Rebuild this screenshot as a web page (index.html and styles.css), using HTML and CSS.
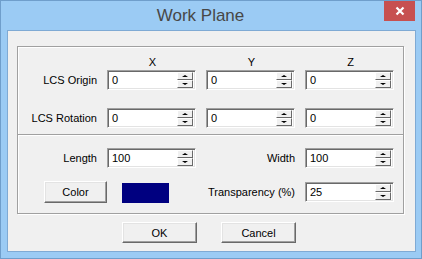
FILE: index.html
```html
<!DOCTYPE html>
<html lang="en">
  <head>
    <meta charset="UTF-8" />
    <title>Work Plane</title>
    <link rel="stylesheet" href="styles.css">
  </head>
  <body>
    <div class="window">
      <div class="titlebar">
        <div class="title">Work Plane</div>
        <div class="close_button">
          <svg width="10" height="10" viewBox="0 0 10 10">
            <path d="M1.5 1.5 L8.5 8.5 M8.5 1.5 L1.5 8.5" stroke="#fff" stroke-width="2.2" />
          </svg>
        </div>
      </div>
      <div class="client">
        <div class="group">
          <div class="section coords">
            <div class="row head">
              <span></span>
              <span class="axis">X</span>
              <span class="axis">Y</span>
              <span class="axis">Z</span>
            </div>
            <div class="row">
              <label>LCS Origin</label>
              <div class="spin"><span class="val">0</span><span class="arrows"><i class="up"></i><i class="down"></i></span></div>
              <div class="spin"><span class="val">0</span><span class="arrows"><i class="up"></i><i class="down"></i></span></div>
              <div class="spin"><span class="val">0</span><span class="arrows"><i class="up"></i><i class="down"></i></span></div>
            </div>
            <div class="row second">
              <label>LCS Rotation</label>
              <div class="spin"><span class="val">0</span><span class="arrows"><i class="up"></i><i class="down"></i></span></div>
              <div class="spin"><span class="val">0</span><span class="arrows"><i class="up"></i><i class="down"></i></span></div>
              <div class="spin"><span class="val">0</span><span class="arrows"><i class="up"></i><i class="down"></i></span></div>
            </div>
          </div>
          <div class="section plane">
            <div class="row">
              <label>Length</label>
              <div class="spin"><span class="val">100</span><span class="arrows"><i class="up"></i><i class="down"></i></span></div>
              <label>Width</label>
              <div class="spin"><span class="val">100</span><span class="arrows"><i class="up"></i><i class="down"></i></span></div>
            </div>
            <div class="row color_row">
              <div class="color_pick">
                <button class="btn color_button">Color</button>
                <div class="swatch"></div>
              </div>
              <label>Transparency (%)</label>
              <div class="spin"><span class="val">25</span><span class="arrows"><i class="up"></i><i class="down"></i></span></div>
            </div>
          </div>
        </div>
        <div class="actions">
          <button class="btn action">OK</button>
          <button class="btn action">Cancel</button>
        </div>
      </div>
    </div>
  </body>
</html>
```

FILE: styles.css
```css
* {
  margin: 0;
  padding: 0;
  box-sizing: border-box;
}
body {
  font-family: "Liberation Sans", Arial, sans-serif;
  font-size: 11px;
  color: #000;
  background-color: #9bcbf4;
}
.window {
  width: 422px;
  height: 259px;
  border: 1px solid #6f9ecb;
  background-color: #9bcbf4;
  display: flex;
  flex-direction: column;
}
.titlebar {
  height: 29px;
  display: flex;
  align-items: flex-start;
}
.title {
  flex: 1;
  text-align: center;
  font-size: 17px;
  line-height: 29px;
  padding-left: 16px;
  color: #474747;
}
.close_button {
  width: 31px;
  height: 20px;
  margin-right: 6px;
  background-color: #c75050;
  display: flex;
  align-items: center;
  justify-content: center;
}
.client {
  flex: 1;
  margin: 0 5px 6px 6px;
  border: 1px solid #7faad4;
  background-color: #f0f0f0;
  padding: 15px 0 0 9px;
}
.group {
  width: 387px;
  border: 1px solid #a0a0a0;
  box-shadow: inset 1px 1px 0 #fff, 1px 1px 0 #fff;
}
.row {
  display: grid;
  grid-template-columns: 79px 89px 89px 89px;
  column-gap: 10px;
  align-items: center;
  height: 20px;
}
.coords {
  padding: 7px 0 6px 0;
}
.head {
  height: 16px;
}
.axis {
  text-align: center;
  line-height: 16px;
  padding-left: 2px;
}
.second {
  margin-top: 18px;
}
.plane {
  border-top: 1px solid #a0a0a0;
  box-shadow: inset 0 1px 0 #fff;
  padding: 13px 0 10px 0;
}
.color_row {
  margin-top: 13px;
  height: 22px;
}
label {
  text-align: right;
  white-space: nowrap;
}
.spin {
  display: flex;
  height: 20px;
  border: 1px solid;
  border-color: #a0a0a0 #fff #fff #a0a0a0;
  box-shadow: inset 1px 1px 0 #696969, inset -1px -1px 0 #e3e3e3;
  background-color: #fff;
  padding: 1px;
}
.val {
  flex: 1;
  padding-left: 3px;
  line-height: 17px;
}
.arrows {
  width: 16px;
  display: flex;
  flex-direction: column;
  margin-right: 1px;
}
.arrows i {
  flex: 1;
  background-color: #f0f0f0;
  border: 1px solid;
  border-color: #fff #696969 #696969 #fff;
  display: flex;
  align-items: center;
  justify-content: center;
}
.arrows i::after {
  content: "";
  border-left: 3px solid transparent;
  border-right: 3px solid transparent;
}
.arrows .up::after {
  border-bottom: 2px solid #000;
}
.arrows .down::after {
  border-top: 2px solid #000;
}
.color_pick {
  grid-column: 1 / 3;
  display: flex;
  align-items: center;
  gap: 15px;
  padding-left: 26px;
}
.btn {
  font-family: "Liberation Sans", Arial, sans-serif;
  font-size: 11px;
  color: #000;
  background-color: #f0f0f0;
  border: 1px solid;
  border-color: #fff #696969 #696969 #fff;
  box-shadow: inset -1px -1px 0 #a0a0a0, inset 1px 1px 0 #e3e3e3;
}
.color_button {
  width: 63px;
  height: 22px;
}
.swatch {
  width: 47px;
  height: 20px;
  margin-top: 2px;
  background-color: #000080;
}
.actions {
  display: flex;
  gap: 24px;
  padding-left: 105px;
  margin-top: 8px;
}
.action {
  width: 75px;
  height: 21px;
}
```
